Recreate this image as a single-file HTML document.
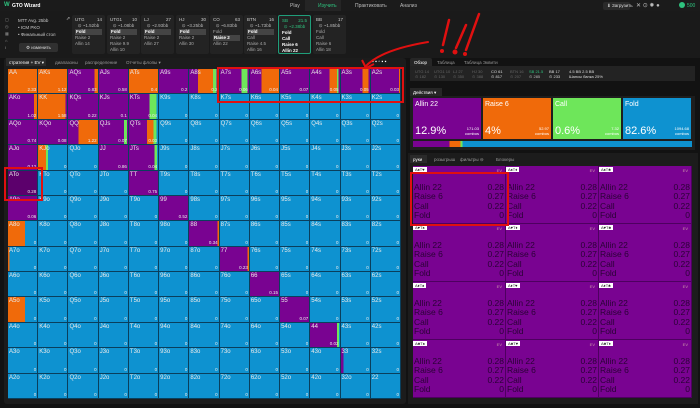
<!DOCTYPE html>
<html><head><meta charset="utf-8"><style>
*{margin:0;padding:0;box-sizing:border-box}
body{width:700px;height:408px;background:#121212;font-family:"Liberation Sans",sans-serif;color:#ddd;position:relative;overflow:hidden}
.a{position:absolute}
.top{left:0;top:0;width:700px;height:11px;background:#1b1b1b}
.t{font-size:5px;color:#bbb;position:absolute;white-space:nowrap}
.card{position:absolute;top:15px;width:33px;height:39px;background:#232323;border-radius:2px;font-size:4.5px;color:#aaa;padding:2px 3px;line-height:6px}
.card .h{display:flex;justify-content:space-between;color:#ccc}
.card .s{text-align:center;color:#bbb}
.card .f{background:#444;color:#fff;font-weight:bold;padding-left:1px}
.grid{position:absolute;left:8px;top:69px;width:393px;height:330px;display:grid;grid-template-columns:repeat(13,1fr);grid-template-rows:repeat(13,1fr);background:#0a3a55}
.grid div{position:relative;background:#0e92d0;border-right:1px solid #0a3f5c;border-bottom:1px solid #0a3f5c;overflow:hidden}
.grid b{position:absolute;left:1px;top:1px;font-size:6px;font-weight:normal;color:#eaeaea}
.grid i{position:absolute;right:1px;bottom:1px;font-size:4.5px;font-style:normal;color:#eee}
.grid .p{background:#790391}.grid .o{background:#f06a0a}
.hg{position:absolute;left:413px;top:166px;width:279px;height:232px;display:grid;grid-template-columns:repeat(3,1fr);grid-template-rows:repeat(4,1fr);background:#4a0060}
.hg div{background:#790391;border-right:1px solid #4e0060;border-bottom:1px solid #4e0060;position:relative;color:#2a0336;font-size:8.5px;line-height:9.4px;padding-top:17px}
.hg p{display:flex;justify-content:space-between;padding:0 1px}
.hg span.tag{position:absolute;left:0;top:1px;background:#fff;color:#222;font-size:4px;line-height:5px;padding:0 2px}
.hg span.ev{position:absolute;right:3px;top:3px;font-size:4px;line-height:4px;color:#c9a}
.act{position:absolute;top:98px;width:68px;height:41px;color:#fff;padding:3px 2px}
.act .n{font-size:7px}.act .v{position:absolute;bottom:2px;left:2px;font-size:11px}
.act .c{position:absolute;bottom:3px;right:2px;font-size:4px;text-align:right}
</style></head><body>
<div class="a top"></div>
<div class="t" style="left:4px;top:2px;color:#2ec27e;font-weight:bold;font-size:6px">W</div>
<div class="t" style="left:12px;top:3px;color:#fff;font-weight:bold">GTO Wizard</div>
<div class="t" style="left:290px;top:3px">Play</div>
<div class="a" style="left:305px;top:0;width:36px;height:11px;background:#252525"></div>
<div class="t" style="left:318px;top:3px;color:#2ec27e">Изучить</div>
<div class="t" style="left:355px;top:3px">Практиковать</div>
<div class="t" style="left:400px;top:3px">Анализ</div>
<div class="a" style="left:603px;top:2px;width:27px;height:8px;background:#2a2a2a;border-radius:2px"></div>
<div class="t" style="left:607px;top:3px;font-size:4.5px;color:#ddd">⬇ Загрузить</div>
<div class="t" style="left:636px;top:2px;font-size:6px">✕ ⊙ ✹ ●</div>
<div class="a" style="left:679px;top:2px;width:6px;height:6px;border-radius:50%;background:#2ec27e"></div>
<div class="t" style="left:687px;top:3px;color:#2ec27e">500</div>

<div class="a" style="left:0;top:11px;width:700px;height:47px;background:#1a1a1a"></div>
<div class="t" style="left:5px;top:16px;font-size:4px;line-height:7px;color:#999">▢<br>◷<br>▦<br>⌂<br>I</div>
<div class="t" style="left:18px;top:17px;font-size:4.5px;line-height:7px;color:#ccc">MTT Avg. 25bb<br>• ICM PKO<br>• Финальный стол</div>
<div class="a" style="left:19px;top:43px;width:39px;height:9px;background:#303030;border-radius:2px"></div>
<div class="t" style="left:26px;top:45px;font-size:4.5px;color:#ddd">⚙ изменить</div>
<div class="t" style="left:66px;top:16px;font-size:5px">⇗</div>
<div class="card" style="left:72px"><div class="h"><span>UTG</span><span>14</span></div><div class="s">⊙ ~1.52bb</div><div class="f">Fold</div>Raise 2<br>Allin 14</div>
<div class="card" style="left:107px"><div class="h"><span>UTG1</span><span>10</span></div><div class="s">⊙ ~1.08bb</div><div class="f">Fold</div>Raise 2<br>Raise 9.9<br>Allin 10</div>
<div class="card" style="left:141px"><div class="h"><span>LJ</span><span>27</span></div><div class="s">⊙ ~2.93bb</div><div class="f">Fold</div>Raise 2<br>Allin 27</div>
<div class="card" style="left:176px"><div class="h"><span>HJ</span><span>30</span></div><div class="s">⊙ ~3.25bb</div><div class="f">Fold</div>Raise 2<br>Allin 30</div>
<div class="card" style="left:210px"><div class="h"><span>CO</span><span>63</span></div><div class="s">⊙ ~6.83bb</div>Fold<div class="f">Raise 2</div>Allin 22</div>
<div class="card" style="left:244px"><div class="h"><span>BTN</span><span>16</span></div><div class="s">⊙ ~1.73bb</div><div class="f">Fold</div>Call<br>Raise 4.5<br>Allin 16</div>
<div class="card" style="left:278px;border:1px solid #1f9e7a;color:#fff"><div class="h" style="color:#2ec27e"><span>SB</span><span>21.5</span></div><div class="s" style="color:#2ec27e">⊙ ~2.38bb</div><b>Fold<br>Call<br>Raise 6<br>Allin 22</b></div>
<div class="card" style="left:313px"><div class="h"><span>BB</span><span>17</span></div><div class="s">⊙ ~1.85bb</div>Fold<br>Call<br>Raise 6<br>Allin 18</div>

<div class="a" style="left:4px;top:58px;width:402px;height:346px;background:#1c1c1c;border-radius:3px"></div>
<div class="a" style="left:6px;top:58px;width:40px;height:8px;background:#2a2a2a"></div>
<div class="t" style="left:9px;top:60px;font-size:4.5px;color:#fff">стратегия + EV ▾</div>
<div class="t" style="left:55px;top:60px;font-size:4.5px;color:#999">диапазоны</div>
<div class="t" style="left:85px;top:60px;font-size:4.5px;color:#999">распределение</div>
<div class="t" style="left:126px;top:60px;font-size:4.5px;color:#999">Отчеты флопы ▾</div>
<div class="t" style="left:372px;top:59px;font-size:5px;color:#fff">▪ ▪ ▫ ▪ ▪</div>

<div class="grid">
<div class="o"><b>AA</b><i>2.33</i></div>
<div class="o"><b>AKs</b><i>1.12</i></div>
<div style="background:linear-gradient(90deg,#790391 0 88%,#f06a0a 88%)"><b>AQs</b><i>0.83</i></div>
<div class="p"><b>AJs</b><i>0.58</i></div>
<div class="o"><b>ATs</b><i>0.4</i></div>
<div class="p"><b>A9s</b><i>0.2</i></div>
<div style="background:linear-gradient(90deg,#790391 0 30%,#f06a0a 30% 80%,#6ee65a 80% 92%,#790391 92%)"><b>A8s</b><i>0.2</i></div>
<div style="background:linear-gradient(90deg,#790391 0 75%,#6ee65a 75% 95%,#790391 95%)"><b>A7s</b><i>0.06</i></div>
<div style="background:linear-gradient(90deg,#790391 0 40%,#f06a0a 40%)"><b>A6s</b><i>0.04</i></div>
<div class="p"><b>A5s</b><i>0.07</i></div>
<div style="background:linear-gradient(90deg,#790391 0 65%,#f06a0a 65% 90%,#6ee65a 90% 95%,#790391 95%)"><b>A4s</b><i>0.05</i></div>
<div style="background:linear-gradient(90deg,#790391 0 75%,#f06a0a 75% 95%,#790391 95%)"><b>A3s</b><i>0.05</i></div>
<div style="background:linear-gradient(90deg,#790391 0 96%,#f06a0a 96%)"><b>A2s</b><i>0.03</i></div>

<div style="background:linear-gradient(90deg,#790391 0 90%,#f06a0a 90%)"><b>AKo</b><i>1.02</i></div>
<div style="background:linear-gradient(90deg,#f06a0a 0 95%,#790391 95%)"><b>KK</b><i>1.58</i></div>
<div class="p"><b>KQs</b><i>0.22</i></div>
<div class="p"><b>KJs</b><i>0.1</i></div>
<div style="background:linear-gradient(90deg,#790391 0 70%,#6ee65a 70% 95%,#0e92d0 95%)"><b>KTs</b><i>0.04</i></div>
<div><b>K9s</b><i>0</i></div><div><b>K8s</b><i>0</i></div><div><b>K7s</b><i>0</i></div><div><b>K6s</b><i>0</i></div><div><b>K5s</b><i>0</i></div><div><b>K4s</b><i>0</i></div><div><b>K3s</b><i>0</i></div><div><b>K2s</b><i>0</i></div>

<div class="p"><b>AQo</b><i>0.74</i></div>
<div class="p"><b>KQo</b><i>0.08</i></div>
<div style="background:linear-gradient(90deg,#790391 0 35%,#f06a0a 35%)"><b>QQ</b><i>1.22</i></div>
<div style="background:linear-gradient(90deg,#790391 0 87%,#6ee65a 87% 97%,#790391 97%)"><b>QJs</b><i>0.07</i></div>
<div style="background:linear-gradient(90deg,#790391 0 62%,#f06a0a 62% 85%,#6ee65a 85% 95%,#0e92d0 95%)"><b>QTs</b><i>0.03</i></div>
<div><b>Q9s</b><i>0</i></div><div><b>Q8s</b><i>0</i></div><div><b>Q7s</b><i>0</i></div><div><b>Q6s</b><i>0</i></div><div><b>Q5s</b><i>0</i></div><div><b>Q4s</b><i>0</i></div><div><b>Q3s</b><i>0</i></div><div><b>Q2s</b><i>0</i></div>

<div class="p"><b>AJo</b><i>0.12</i></div>
<div style="background:linear-gradient(90deg,#f06a0a 0 28%,#6ee65a 28% 34%,#0e92d0 34%)"><b>KJo</b><i>0</i></div>
<div><b>QJo</b><i>0</i></div>
<div class="p"><b>JJ</b><i>0.86</i></div>
<div style="background:linear-gradient(90deg,#790391 0 88%,#6ee65a 88% 96%,#0e92d0 96%)"><b>JTs</b><i>0.04</i></div>
<div><b>J9s</b><i>0</i></div><div><b>J8s</b><i>0</i></div><div><b>J7s</b><i>0</i></div><div><b>J6s</b><i>0</i></div><div><b>J5s</b><i>0</i></div><div><b>J4s</b><i>0</i></div><div><b>J3s</b><i>0</i></div><div><b>J2s</b><i>0</i></div>

<div style="background:#5c006c"><b>ATo</b><i>0.28</i></div>
<div><b>KTo</b><i>0</i></div><div><b>QTo</b><i>0</i></div><div><b>JTo</b><i>0</i></div>
<div class="p"><b>TT</b><i>0.75</i></div>
<div><b>T9s</b><i>0</i></div><div><b>T8s</b><i>0</i></div><div><b>T7s</b><i>0</i></div><div><b>T6s</b><i>0</i></div><div><b>T5s</b><i>0</i></div><div><b>T4s</b><i>0</i></div><div><b>T3s</b><i>0</i></div><div><b>T2s</b><i>0</i></div>

<div class="p"><b>A9o</b><i>0.06</i></div>
<div><b>K9o</b><i>0</i></div><div><b>Q9o</b><i>0</i></div><div><b>J9o</b><i>0</i></div><div><b>T9o</b><i>0</i></div>
<div class="p"><b>99</b><i>0.52</i></div>
<div><b>98s</b><i>0</i></div><div><b>97s</b><i>0</i></div><div><b>96s</b><i>0</i></div><div><b>95s</b><i>0</i></div><div><b>94s</b><i>0</i></div><div><b>93s</b><i>0</i></div><div><b>92s</b><i>0</i></div>

<div style="background:linear-gradient(90deg,#f06a0a 0 58%,#0e92d0 58%)"><b>A8o</b><i>0</i></div>
<div><b>K8o</b><i>0</i></div><div><b>Q8o</b><i>0</i></div><div><b>J8o</b><i>0</i></div><div><b>T8o</b><i>0</i></div><div><b>98o</b><i>0</i></div>
<div style="background:linear-gradient(90deg,#790391 0 95%,#f06a0a 95%)"><b>88</b><i>0.34</i></div>
<div><b>87s</b><i>0</i></div><div><b>86s</b><i>0</i></div><div><b>85s</b><i>0</i></div><div><b>84s</b><i>0</i></div><div><b>83s</b><i>0</i></div><div><b>82s</b><i>0</i></div>

<div style="background:linear-gradient(90deg,#f06a0a 0 5%,#0e92d0 5%)"><b>A7o</b><i>0</i></div>
<div><b>K7o</b><i>0</i></div><div><b>Q7o</b><i>0</i></div><div><b>J7o</b><i>0</i></div><div><b>T7o</b><i>0</i></div><div><b>97o</b><i>0</i></div><div><b>87o</b><i>0</i></div>
<div style="background:linear-gradient(90deg,#790391 0 94%,#f06a0a 94%)"><b>77</b><i>0.23</i></div>
<div><b>76s</b><i>0</i></div><div><b>75s</b><i>0</i></div><div><b>74s</b><i>0</i></div><div><b>73s</b><i>0</i></div><div><b>72s</b><i>0</i></div>

<div><b>A6o</b><i>0</i></div><div><b>K6o</b><i>0</i></div><div><b>Q6o</b><i>0</i></div><div><b>J6o</b><i>0</i></div><div><b>T6o</b><i>0</i></div><div><b>96o</b><i>0</i></div><div><b>86o</b><i>0</i></div><div><b>76o</b><i>0</i></div>
<div class="p"><b>66</b><i>0.15</i></div>
<div><b>65s</b><i>0</i></div><div><b>64s</b><i>0</i></div><div><b>63s</b><i>0</i></div><div><b>62s</b><i>0</i></div>

<div style="background:linear-gradient(90deg,#f06a0a 0 58%,#0e92d0 58%)"><b>A5o</b><i>0</i></div>
<div><b>K5o</b><i>0</i></div><div><b>Q5o</b><i>0</i></div><div><b>J5o</b><i>0</i></div><div><b>T5o</b><i>0</i></div><div><b>95o</b><i>0</i></div><div><b>85o</b><i>0</i></div><div><b>75o</b><i>0</i></div><div><b>65o</b><i>0</i></div>
<div class="p"><b>55</b><i>0.07</i></div>
<div><b>54s</b><i>0</i></div><div><b>53s</b><i>0</i></div><div><b>52s</b><i>0</i></div>

<div><b>A4o</b><i>0</i></div><div><b>K4o</b><i>0</i></div><div><b>Q4o</b><i>0</i></div><div><b>J4o</b><i>0</i></div><div><b>T4o</b><i>0</i></div><div><b>94o</b><i>0</i></div><div><b>84o</b><i>0</i></div><div><b>74o</b><i>0</i></div><div><b>64o</b><i>0</i></div><div><b>54o</b><i>0</i></div>
<div style="background:linear-gradient(90deg,#790391 0 90%,#6ee65a 90% 97%,#0e92d0 97%)"><b>44</b><i>0.02</i></div>
<div><b>43s</b><i>0</i></div><div><b>42s</b><i>0</i></div>

<div><b>A3o</b><i>0</i></div><div><b>K3o</b><i>0</i></div><div><b>Q3o</b><i>0</i></div><div><b>J3o</b><i>0</i></div><div><b>T3o</b><i>0</i></div><div><b>93o</b><i>0</i></div><div><b>83o</b><i>0</i></div><div><b>73o</b><i>0</i></div><div><b>63o</b><i>0</i></div><div><b>53o</b><i>0</i></div><div><b>43o</b><i>0</i></div>
<div style="background:linear-gradient(90deg,#790391 0 8%,#0e92d0 8%)"><b>33</b><i>0</i></div>
<div><b>32s</b><i>0</i></div>

<div><b>A2o</b><i>0</i></div><div><b>K2o</b><i>0</i></div><div><b>Q2o</b><i>0</i></div><div><b>J2o</b><i>0</i></div><div><b>T2o</b><i>0</i></div><div><b>92o</b><i>0</i></div><div><b>82o</b><i>0</i></div><div><b>72o</b><i>0</i></div><div><b>62o</b><i>0</i></div><div><b>52o</b><i>0</i></div><div><b>42o</b><i>0</i></div><div><b>32o</b><i>0</i></div><div><b>22</b><i>0</i></div>
</div>

<!-- right panel -->
<div class="a" style="left:410px;top:58px;width:22px;height:8px;background:#262626;border-radius:2px 2px 0 0"></div>
<div class="t" style="left:414px;top:60px;font-size:4.5px;color:#fff">Обзор</div>
<div class="t" style="left:437px;top:60px;font-size:4.5px;color:#999">Таблица</div>
<div class="t" style="left:464px;top:60px;font-size:4.5px;color:#999">Таблица Эквити</div>
<div class="a" style="left:410px;top:66px;width:285px;height:15px;background:#232323"></div>
<div class="t" style="left:415px;top:69px;font-size:4px;line-height:5px;color:#666">UTG 14<br>⊙ 182</div>
<div class="t" style="left:434px;top:69px;font-size:4px;line-height:5px;color:#666">UTG1 10<br>⊙ 130</div>
<div class="t" style="left:453px;top:69px;font-size:4px;line-height:5px;color:#666">LJ 27<br>⊙ 350</div>
<div class="t" style="left:472px;top:69px;font-size:4px;line-height:5px;color:#666">HJ 30<br>⊙ 388</div>
<div class="t" style="left:491px;top:69px;font-size:4px;line-height:5px;color:#ddd">CO 61<br>⊙ 817</div>
<div class="t" style="left:510px;top:69px;font-size:4px;line-height:5px;color:#666">BTN 16<br>⊙ 207</div>
<div class="t" style="left:529px;top:69px;font-size:4px;line-height:5px;color:#2ec27e">SB 21.5<br><span style="color:#bbb">⊙ 285</span></div>
<div class="t" style="left:549px;top:69px;font-size:4px;line-height:5px;color:#ddd">BB 17<br>⊙ 233</div>
<div class="t" style="left:569px;top:69px;font-size:4px;line-height:5px;color:#ddd">4.5 BB 2.5 BB<br>Шансы банка 25%</div>
<div class="a" style="left:410px;top:88px;width:32px;height:8px;background:#262626"></div>
<div class="t" style="left:413px;top:90px;font-size:4.5px;color:#fff">Действия ▾</div>
<div class="a" style="left:410px;top:96px;width:285px;height:54px;background:#1e1e1e"></div>
<div class="act" style="left:413px;background:#790391"><div class="n">Allin 22</div><div class="v">12.9%</div><div class="c">171.03<br>combos</div></div>
<div class="act" style="left:483px;background:#f06a0a"><div class="n">Raise 6</div><div class="v">4%</div><div class="c">52.97<br>combos</div></div>
<div class="act" style="left:553px;background:#6ee65a"><div class="n">Call</div><div class="v">0.6%</div><div class="c">7.32<br>combos</div></div>
<div class="act" style="left:623px;background:#0e92d0"><div class="n">Fold</div><div class="v">82.6%</div><div class="c">1094.68<br>combos</div></div>
<div class="a" style="left:413px;top:141px;width:279px;height:6px;background:linear-gradient(90deg,#790391 0 13%,#f06a0a 13% 17%,#6ee65a 17% 17.7%,#0e92d0 17.7%)"></div>
<div class="a" style="left:408px;top:153px;width:290px;height:251px;background:#1c1c1c"></div>
<div class="a" style="left:410px;top:155px;width:17px;height:8px;background:#2a2a2a"></div>
<div class="t" style="left:413px;top:157px;font-size:4.5px;color:#fff">руки</div>
<div class="t" style="left:434px;top:157px;font-size:4.5px;color:#999">розыгрыш</div>
<div class="t" style="left:460px;top:157px;font-size:4.5px;color:#999">фильтры ⊖</div>
<div class="t" style="left:496px;top:157px;font-size:4.5px;color:#999">Блокеры</div>
<div class="hg">
<div><span class="tag">A♠T♥</span><span class="ev">EV</span><p><span>Allin 22</span><span>0.28</span></p><p><span>Raise 6</span><span>0.27</span></p><p><span>Call</span><span>0.22</span></p><p><span>Fold</span><span>0</span></p></div>
<div><span class="tag">A♠T♦</span><span class="ev">EV</span><p><span>Allin 22</span><span>0.28</span></p><p><span>Raise 6</span><span>0.27</span></p><p><span>Call</span><span>0.22</span></p><p><span>Fold</span><span>0</span></p></div>
<div><span class="tag">A♠T♣</span><span class="ev">EV</span><p><span>Allin 22</span><span>0.28</span></p><p><span>Raise 6</span><span>0.27</span></p><p><span>Call</span><span>0.22</span></p><p><span>Fold</span><span>0</span></p></div>
<div><span class="tag">A♥T♠</span><span class="ev">EV</span><p><span>Allin 22</span><span>0.28</span></p><p><span>Raise 6</span><span>0.27</span></p><p><span>Call</span><span>0.22</span></p><p><span>Fold</span><span>0</span></p></div>
<div><span class="tag">A♥T♦</span><span class="ev">EV</span><p><span>Allin 22</span><span>0.28</span></p><p><span>Raise 6</span><span>0.27</span></p><p><span>Call</span><span>0.22</span></p><p><span>Fold</span><span>0</span></p></div>
<div><span class="tag">A♥T♣</span><span class="ev">EV</span><p><span>Allin 22</span><span>0.28</span></p><p><span>Raise 6</span><span>0.27</span></p><p><span>Call</span><span>0.22</span></p><p><span>Fold</span><span>0</span></p></div>
<div><span class="tag">A♦T♠</span><span class="ev">EV</span><p><span>Allin 22</span><span>0.28</span></p><p><span>Raise 6</span><span>0.27</span></p><p><span>Call</span><span>0.22</span></p><p><span>Fold</span><span>0</span></p></div>
<div><span class="tag">A♦T♥</span><span class="ev">EV</span><p><span>Allin 22</span><span>0.28</span></p><p><span>Raise 6</span><span>0.27</span></p><p><span>Call</span><span>0.22</span></p><p><span>Fold</span><span>0</span></p></div>
<div><span class="tag">A♦T♣</span><span class="ev">EV</span><p><span>Allin 22</span><span>0.28</span></p><p><span>Raise 6</span><span>0.27</span></p><p><span>Call</span><span>0.22</span></p><p><span>Fold</span><span>0</span></p></div>
<div><span class="tag">A♣T♠</span><span class="ev">EV</span><p><span>Allin 22</span><span>0.28</span></p><p><span>Raise 6</span><span>0.27</span></p><p><span>Call</span><span>0.22</span></p><p><span>Fold</span><span>0</span></p></div>
<div><span class="tag">A♣T♥</span><span class="ev">EV</span><p><span>Allin 22</span><span>0.28</span></p><p><span>Raise 6</span><span>0.27</span></p><p><span>Call</span><span>0.22</span></p><p><span>Fold</span><span>0</span></p></div>
<div><span class="tag">A♣T♦</span><span class="ev">EV</span><p><span>Allin 22</span><span>0.28</span></p><p><span>Raise 6</span><span>0.27</span></p><p><span>Call</span><span>0.22</span></p><p><span>Fold</span><span>0</span></p></div>
</div>

<!-- annotations -->
<svg class="a" style="left:0;top:0" width="700" height="408">
<g fill="none" stroke="#e01010" stroke-width="2">
<rect x="218" y="68" width="185" height="34"/>
<rect x="5" y="168" width="37" height="32"/>
<rect x="411" y="173" width="97" height="52"/>
<path d="M365 67 Q380 50 428 42" stroke-linecap="round"/>
<path d="M362 60 L366 68 L374 64"/>
<path d="M449 20 L443 45 M466 25 L456 48 M479 14 L466 50" stroke-width="2.5" stroke-linecap="round"/>
</g>
<g fill="#e01010"><circle cx="442" cy="51" r="2"/><circle cx="455" cy="52" r="2.5"/><circle cx="465" cy="54" r="2"/></g>
</svg>
</body></html>
